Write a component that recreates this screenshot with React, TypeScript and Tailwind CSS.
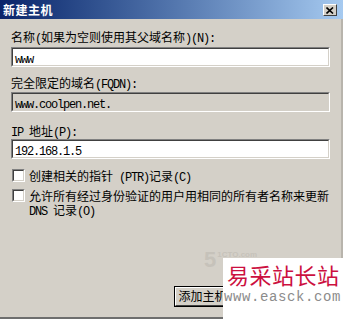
import React from "react";

const cjk = "font-['Noto_Sans_CJK_SC',sans-serif]";

function L({ children }: { children: React.ReactNode }) {
  return (
    <span className="font-['Liberation_Mono','Noto_Sans_CJK_SC',monospace] text-[12px] tracking-[-1.2px]">
      {children}
    </span>
  );
}

function Sunken({
  children,
  bg,
  className = "",
}: {
  children?: React.ReactNode;
  bg: string;
  className?: string;
}) {
  return (
    <div
      className={
        "border border-t-[#808080] border-l-[#808080] border-b-white border-r-white " +
        className
      }
    >
      <div
        className={
          "h-full border border-t-[#404040] border-l-[#404040] border-b-[#d4d0c8] border-r-[#d4d0c8] flex items-center pl-[1px] " +
          bg
        }
      >
        {children}
      </div>
    </div>
  );
}

function Label({ children, className = "" }: { children: React.ReactNode; className?: string }) {
  return (
    <div className={"h-[14px] leading-[14px] text-[12px] text-black whitespace-nowrap " + cjk + " " + className}>
      {children}
    </div>
  );
}

function Checkbox() {
  return <Sunken bg="bg-white" className="w-[13px] h-[13px] shrink-0" />;
}

export default function App() {
  return (
    <div className="relative w-[343px] h-[319px] overflow-hidden bg-[#d4d0c8] flex flex-col">
      {/* title bar */}
      <div className="h-[19px] shrink-0 flex items-center bg-gradient-to-r from-[#0a246a] to-[#a6caf0] pl-[3px] pr-[6px]">
        <span className={"text-white font-bold text-[12px] leading-[19px] tracking-[0.5px] " + cjk}>
          新建主机
        </span>
        <div className="ml-auto w-[14px] h-[12px] mt-[1px] bg-[#d4d0c8] border border-t-white border-l-white border-b-[#404040] border-r-[#404040] flex items-center justify-center">
          <svg width="8" height="7" viewBox="0 0 8 7">
            <path d="M0.5 0.5 L7 6.5 M7 0.5 L0.5 6.5" stroke="#000" strokeWidth="1.6" />
          </svg>
        </div>
      </div>

      <div className="flex flex-1 min-h-0">
        <div className="flex-1 flex flex-col pl-[11px] pr-[11px] pt-[11px]">
          <Label>
            名称<L>(</L>如果为空则使用其父域名称<L>)(N):</L>
          </Label>
          <Sunken bg="bg-white" className="mt-[3px] h-[20px]">
            <span className="ml-[1px]"><L>www</L></span>
          </Sunken>

          <Label className="mt-[9px]">
            完全限定的域名<L>(FQDN):</L>
          </Label>
          <Sunken bg="bg-[#d4d0c8]" className="mt-[2px] h-[20px]">
            <span className="ml-[1px]"><L>www.coolpen.net.</L></span>
          </Sunken>

          <Label className="mt-[12px]">
            <L>IP </L>地址<L>(P):</L>
          </Label>
          <Sunken bg="bg-white" className="mt-[1px] h-[20px]">
            <span className="ml-[1px]"><L>192.168.1.5</L></span>
          </Sunken>

          <div className="mt-[10px] pl-[1px] flex items-start gap-[4px]">
            <Checkbox />
            <Label>
              创建相关的指针<L> (PTR)</L>记录<L>(C)</L>
            </Label>
          </div>

          <div className="mt-[6px] pl-[1px] flex items-start gap-[4px]">
            <Checkbox />
            <div className="flex flex-col">
              <Label>允许所有经过身份验证的用户用相同的所有者名称来更新</Label>
              <Label>
                <L>DNS </L>记录<L>(O)</L>
              </Label>
            </div>
          </div>

          <div className="mt-auto mb-[10px] flex">
            <button className="ml-[163px] w-[75px] h-[21px] border border-black bg-[#d4d0c8] p-0">
              <div className="h-full border border-t-white border-l-white border-b-[#404040] border-r-[#404040] flex items-center justify-center">
                <span className={"text-[12px] leading-none text-black whitespace-nowrap " + cjk}>
                  添加主机<L>(H)</L>
                </span>
              </div>
            </button>
          </div>
        </div>
        <div className="w-[2px] bg-[#b8b4ac]" />
      </div>
      <div className="h-[2px] shrink-0 bg-[#6e6e6e]" />

      {/* faint watermark */}
      <div className="absolute left-[204px] top-[249px] flex items-start text-[#c6c2ba]">
        <span className="font-['Liberation_Sans',sans-serif] font-bold text-[22px] leading-none">5</span>
        <span className="font-['Liberation_Sans',sans-serif] font-bold text-[8px] leading-none mt-[2px] ml-[1px]">1CTO.com</span>
      </div>

      {/* site watermark */}
      <div className="absolute left-[223px] top-[258px] w-[120px] h-[61px] bg-white flex flex-col">
        <span className={"ml-[4px] mt-[3px] text-[22px] leading-[26px] text-[#cc1040] tracking-[0.5px] whitespace-nowrap " + cjk}>
          易采站长站
        </span>
        <span className="ml-[1px] mt-[2px] text-[14px] leading-[16px] text-[#8c8c8c] font-['Liberation_Mono',monospace] tracking-[0.6px] whitespace-nowrap">
          www.easck.com
        </span>
      </div>
    </div>
  );
}
